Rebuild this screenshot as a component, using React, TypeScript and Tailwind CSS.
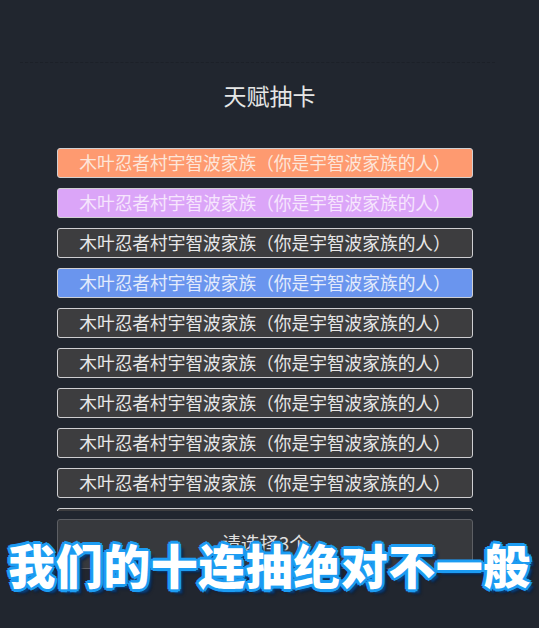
import React from "react";

const items: { bg: string; text: string }[] = [
  { bg: "bg-[#fe9a70]", text: "text-[#fde6da]" },
  { bg: "bg-[#dba5f8]", text: "text-[#f6e6fd]" },
  { bg: "bg-[#3d3d3f]", text: "text-[#e8e8e8]" },
  { bg: "bg-[#6a95ee]", text: "text-[#e3ebfc]" },
  { bg: "bg-[#3d3d3f]", text: "text-[#e8e8e8]" },
  { bg: "bg-[#3d3d3f]", text: "text-[#e8e8e8]" },
  { bg: "bg-[#3d3d3f]", text: "text-[#e8e8e8]" },
  { bg: "bg-[#3d3d3f]", text: "text-[#e8e8e8]" },
  { bg: "bg-[#3d3d3f]", text: "text-[#e8e8e8]" },
  { bg: "bg-[#3d3d3f]", text: "text-[#e8e8e8]" },
];

export default function App() {
  return (
    <div className="relative h-[628px] w-full overflow-hidden bg-[#21262f] font-['Noto_Sans_CJK_SC','Noto_Sans',sans-serif]">
      <div className="pt-[62px]">
        <div className="ml-[20px] h-px w-[475px] border-t border-dashed border-[#1c2028]" />
        <h1 className="mt-[16px] text-center text-[23px] leading-[32px] text-[#e6e6e6]">天赋抽卡</h1>
        <div className="ml-[57px] mt-[37px] flex h-[363px] w-[416px] flex-col gap-[10px] overflow-hidden">
          {items.map((it, i) => (
            <div
              key={i}
              className={`flex h-[30px] shrink-0 items-center justify-center rounded-[3px] border-[1.5px] border-[#cfcfd2] ${it.bg} ${it.text} text-[17.7px] leading-none`}
            >
              木叶忍者村宇智波家族（你是宇智波家族的人）
            </div>
          ))}
        </div>
        <div className="ml-[57px] mt-[8px] flex h-[50px] w-[416px] items-start justify-center rounded-[3px] border border-[#5d5f64] bg-[#37393d] pt-[10px] text-[19px] leading-[26px] text-[#e0e0e0]">
          请选择3个
        </div>
      </div>
      <div className="absolute left-0 right-0 top-[535px] text-center text-[47px] font-black leading-[58px] tracking-[0.5px] text-white [text-shadow:0_0_1px_#1c9cf2,3px_0_0_#1c9cf2,-3px_0_0_#1c9cf2,0_3px_0_#1c9cf2,0_-3px_0_#1c9cf2,2px_2px_0_#1c9cf2,-2px_2px_0_#1c9cf2,2px_-2px_0_#1c9cf2,-2px_-2px_0_#1c9cf2,4px_4px_2px_#0b3f7a,5px_5px_3px_#0a1e3a]">
        我们的十连抽绝对不一般
      </div>
    </div>
  );
}
